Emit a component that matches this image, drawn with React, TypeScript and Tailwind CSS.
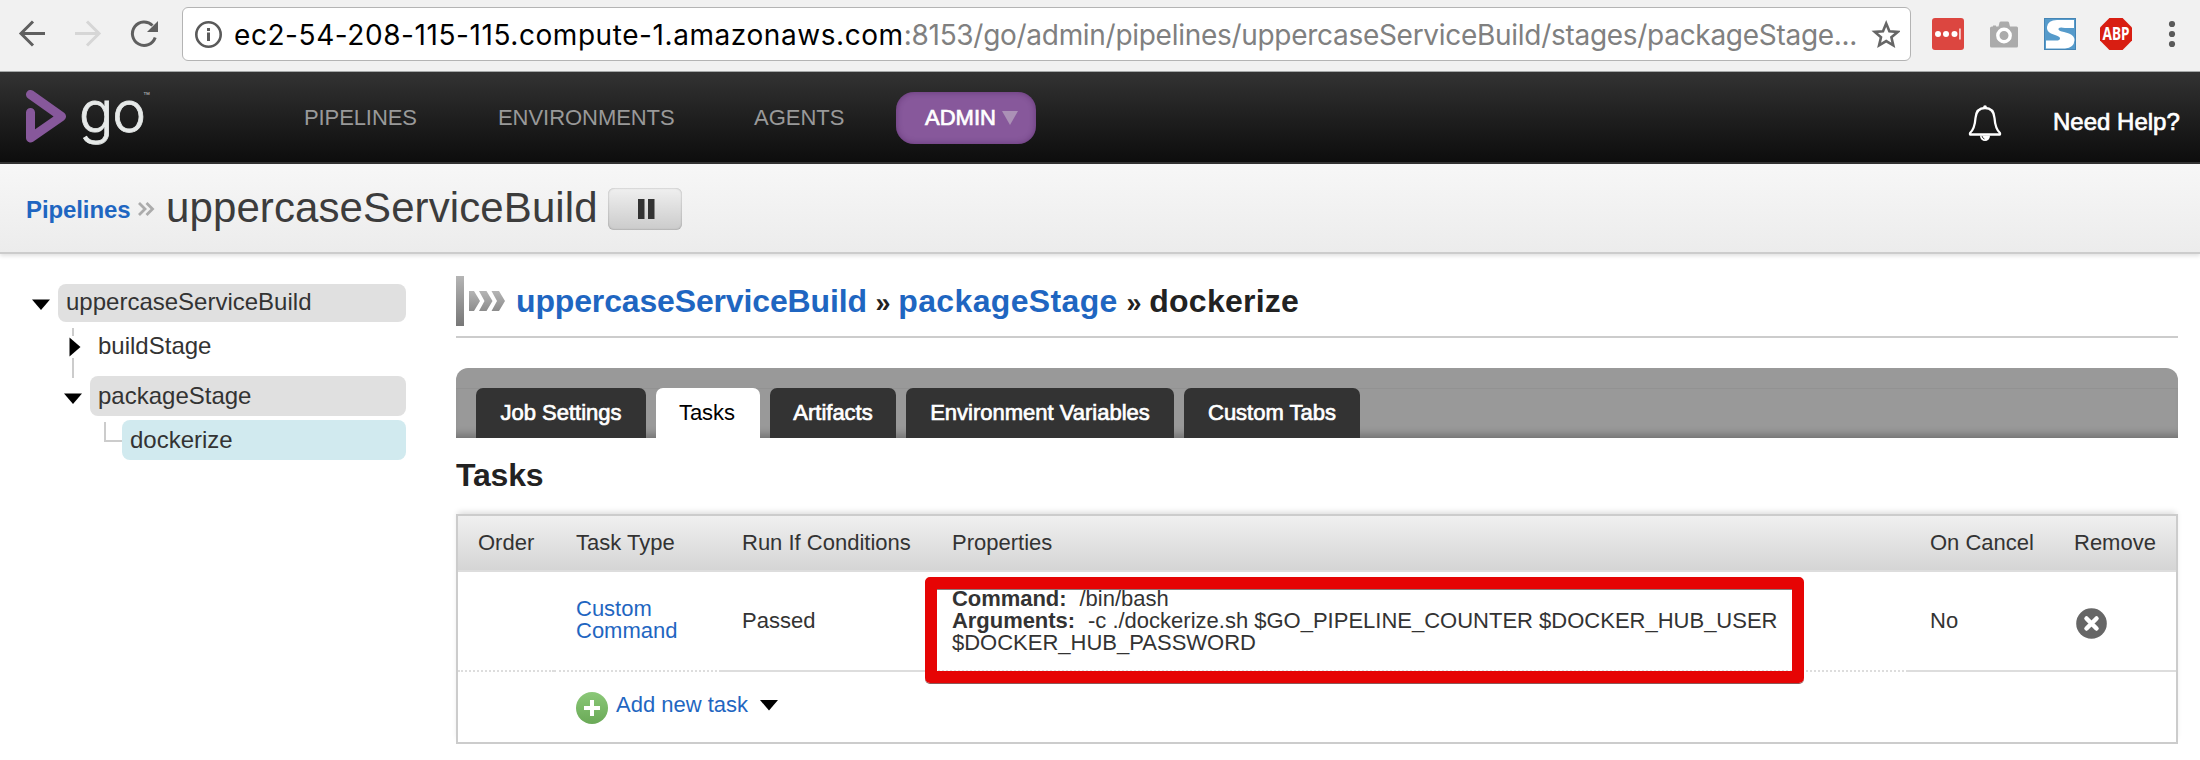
import type { ReactNode } from 'react';

function BrowserBar() {
  return (
    <div className="flex h-[72px] items-start border-b border-[#a5a8a8] bg-[#f1f1f1]">
      <svg width="182" height="71" viewBox="0 0 182 71" fill="none" className="shrink-0">
        <g stroke="#5f5f5f" strokeWidth="3">
          <path d="M45 33.5H21M33 21.5L21 33.5L33 45.5" />
          <path d="M75 33.5H99M87 21.5L99 33.5L87 45.5" stroke="#d6d6d6" />
          <path d="M155.2 37.5A11.7 11.7 0 1 1 152.5 25.5" />
        </g>
        <path d="M158 21V32H147Z" fill="#5f5f5f" />
      </svg>
      <div className="mt-[7px] flex h-[54px] w-[1729px] shrink-0 items-center rounded-[6px] border border-[#b4b4b4] bg-white">
        <svg width="28" height="28" viewBox="0 0 28 28" fill="none" className="ml-3 shrink-0">
          <circle cx="13.5" cy="14.5" r="12.2" stroke="#5a5a5a" strokeWidth="2.6" />
          <path d="M12 12.5H15V21H12ZM12 8H15V11H12Z" fill="#5a5a5a" />
        </svg>
        <div className="ml-[11px] w-[1634px] pt-0.5 whitespace-nowrap font-['Inter',sans-serif] text-[28px] leading-[52px]">
          <span className="tracking-[0.57px] text-black">ec2-54-208-115-115.compute-1.amazonaws.com</span>
          <span className="tracking-[-0.29px] text-[#808080]">
            :8153/go/admin/pipelines/uppercaseServiceBuild/stages/packageStage...
          </span>
        </div>
        <svg width="32" height="32" viewBox="0 0 32 32" fill="none" className="shrink-0">
          <path
            d="M18.2 5.5L21.4 13.2L29.7 13.9L23.4 19.3L25.3 27.4L18.2 23.1L11.1 27.4L13 19.3L6.7 13.9L15 13.2Z"
            stroke="#666"
            strokeWidth="2.6"
          />
        </svg>
      </div>
      <div className="mt-[18px] ml-[21px] flex h-8 items-center">
        <svg width="32" height="32" viewBox="0 0 32 32">
          <rect width="32" height="32" rx="3" fill="#dc4640" />
          <g fill="#fff">
            <circle cx="6" cy="16" r="3" />
            <circle cx="14" cy="16" r="3" />
            <circle cx="22.5" cy="16" r="3" />
            <rect x="27.3" y="10.5" width="1.3" height="11" />
          </g>
        </svg>
        <svg width="30" height="32" viewBox="0 0 30 32" className="ml-[25px]">
          <path
            d="M3 8.5H4V7.5H7V8.5H9.5L10.5 4.5Q10.8 3.5 12 3.5H18.5Q19.7 3.5 20 4.5L21 8.5H27.5Q29 8.5 29 10V28Q29 29.5 27.5 29.5H2.5Q1 29.5 1 28V10Q1 8.5 3 8.5Z"
            fill="#ababab"
          />
          <circle cx="15" cy="17.5" r="6.2" fill="#ababab" stroke="#fff" strokeWidth="3.4" />
        </svg>
        <svg width="32" height="32" viewBox="0 0 32 32" className="ml-[25px]">
          <rect width="32" height="32" fill="#4585b5" />
          <rect x="1" y="1" width="30" height="30" fill="#569bcb" />
          <path
            d="M30 2V10H21Q14 8.5 14.5 11.5Q15 13 20 14L25 15.5Q30.5 17.5 30.5 22Q30 30 21 30.5H2V22.5H10Q16.5 23 16 20Q15.5 18.5 11 17L7 15.5Q2.5 13 3 9Q4 2 13 2Z"
            fill="#fff"
          />
        </svg>
        <svg width="32" height="32" viewBox="0 0 32 32" className="ml-6 overflow-visible">
          <path d="M9.4 0H22.6L32 9.4V22.6L22.6 32H9.4L0 22.6V9.4Z" fill="#d81e12" />
          <text
            x="16"
            y="22"
            textAnchor="middle"
            textLength="27"
            lengthAdjust="spacingAndGlyphs"
            className="fill-white font-['Noto_Sans',sans-serif] text-[17px] font-bold"
          >
            ABP
          </text>
        </svg>
        <svg width="8" height="32" viewBox="0 0 8 32" className="ml-9" fill="#5a5a5a">
          <circle cx="4" cy="6" r="3.1" />
          <circle cx="4" cy="16" r="3.1" />
          <circle cx="4" cy="26" r="3.1" />
        </svg>
      </div>
    </div>
  );
}

function SiteHeader() {
  return (
    <div className="flex h-[92px] items-start border-b-2 border-[#333] bg-linear-to-b from-[#333] to-[#0d0d0d] text-[22px] leading-[28px] text-[#999]">
      <svg width="42" height="56" viewBox="0 0 42 56" fill="none" className="mt-[17px] ml-[26px] shrink-0">
        <path
          d="M4.5 5.5L35.5 27.5L4.5 49V23.5"
          stroke="#87589b"
          strokeWidth="9"
          strokeLinecap="round"
          strokeLinejoin="round"
        />
      </svg>
      <div className="mt-[14px] ml-[11px] flex w-[225px] items-start font-['Inter',sans-serif] text-[#e6e9e8]">
        <span className="text-[57px] leading-[52px] font-light tracking-[-1px] [-webkit-text-stroke:0.8px_#e6e9e8]">go</span>
        <span className="mt-[4px] -ml-0.5 text-[11px] leading-[12px] text-[#aaa]">™</span>
      </div>
      <div className="mt-8 w-[194px] tracking-[-0.1px]">PIPELINES</div>
      <div className="mt-8 w-[256px] tracking-[-0.05px]">ENVIRONMENTS</div>
      <div className="mt-8 w-[142px]">AGENTS</div>
      <div className="mt-5 flex h-[52px] w-[140px] items-center rounded-[18px] bg-[#87589b] pl-[29px] text-white shadow-[inset_0_0_6px_rgba(50,10,70,0.4)]">
        <span className="[-webkit-text-stroke:0.7px_#fff]">ADMIN</span>
        <svg width="16" height="14" viewBox="0 0 16 14" className="ml-[6px]">
          <path d="M0 0H16L8 14Z" fill="#ab91b6" />
        </svg>
      </div>
      <svg width="34" height="38" viewBox="0 0 34 38" fill="none" className="mt-8 ml-[932px] shrink-0">
        <path
          d="M17 4C11 4 8 8 7.5 14C7 21 6 25.5 2 29V30.5H32V29C28 25.5 27 21 26.5 14C26 8 23 4 17 4Z"
          stroke="#fff"
          strokeWidth="2.3"
          strokeLinejoin="round"
        />
        <circle cx="17" cy="3.2" r="1.9" fill="#fff" />
        <path d="M12 31.5A5 5.5 0 0 0 22 31.5Z" fill="#fff" />
        <path d="M14 32Q14.5 34.5 16.5 35" stroke="#444" />
      </svg>
      <div className="mt-9 ml-[51px] whitespace-nowrap text-[24px] text-white [-webkit-text-stroke:0.7px_#fff]">
        Need Help?
      </div>
    </div>
  );
}

function TitleBar() {
  return (
    <div className="flex h-[90px] items-start border-b-2 border-[#ccc] bg-linear-to-b from-[#f7f7f7] to-[#ececec] shadow-[0_2px_4px_rgba(0,0,0,0.12)]">
      <span className="mt-[31px] ml-[26px] w-[111px] text-[24px] leading-[30px] font-bold tracking-[-0.1px] text-[#1f66c1]">
        Pipelines
      </span>
      <svg width="18" height="14" viewBox="0 0 18 14" fill="none" className="mt-[38px]" stroke="#ababab" strokeWidth="2.8">
        <path d="M2 1L8 7L2 13M9.5 1L15.5 7L9.5 13" />
      </svg>
      <h1 className="mt-[19px] ml-[11px] w-[442px] text-[42px] leading-[50px] tracking-[0.1px] text-[#3c3c3c]">
        uppercaseServiceBuild
      </h1>
      <div className="mt-6 flex h-[42px] w-[74px] items-center justify-center rounded-[6px] bg-linear-to-b from-[#f0f0f0] to-[#cbcbcb] shadow-[inset_0_0_2px_rgba(0,0,0,0.35)]">
        <svg width="18" height="20" viewBox="0 0 18 20" fill="#333" className="mb-px ml-px">
          <rect x="1" width="6.5" height="20" />
          <rect x="11" width="6.5" height="20" />
        </svg>
      </div>
    </div>
  );
}

function Sidebar() {
  return (
    <div className="flex w-[406px] shrink-0 flex-col pt-[30px] text-[24px] text-[#333]">
      <div className="flex h-[38px] pl-8">
        <svg width="26" height="38" viewBox="0 0 26 38">
          <path d="M0 15.5H18L9 26Z" />
        </svg>
        <div className="flex-1 rounded-[8px] bg-[#e0e0e0] pl-2 leading-[36px]">uppercaseServiceBuild</div>
      </div>
      <div className="flex h-[54px] pl-16">
        <svg width="26" height="54" viewBox="0 0 26 54">
          <path d="M8 6H10V14H8ZM8 36H10V54H8Z" fill="#ccc" />
          <path d="M5.5 15.5V34.5L16.5 25Z" />
        </svg>
        <div className="pl-2 leading-[48px]">buildStage</div>
      </div>
      <div className="flex h-10 pl-16">
        <svg width="26" height="40" viewBox="0 0 26 40">
          <path d="M8 0H10V2H8Z" fill="#ccc" />
          <path d="M0 17.5H18L9 28Z" />
        </svg>
        <div className="flex-1 rounded-[8px] bg-[#e0e0e0] pl-2 leading-[40px]">packageStage</div>
      </div>
      <div className="mt-1 flex h-10 pl-[98px]">
        <svg width="24" height="40" viewBox="0 0 24 40" fill="none" stroke="#ccc" strokeWidth="2">
          <path d="M7 2V21H24" />
        </svg>
        <div className="flex-1 rounded-[8px] bg-[#d1eaef] pl-2 leading-[40px]">dockerize</div>
      </div>
    </div>
  );
}

function Tab({ children, className }: { children: ReactNode; className: string }) {
  return (
    <div
      className={`-mt-px h-[50px] rounded-t-[7px] bg-[#333] text-center text-[22px] leading-[49px] text-white [-webkit-text-stroke:0.7px_#fff] ${className}`}
    >
      {children}
    </div>
  );
}

const columns = 'grid grid-cols-[96px_167px_208px_979px_143px_1fr]';

function TaskTable() {
  return (
    <div className="mt-0.5 border-2 border-[#ccc] text-[22px] leading-[22px] text-[#333] shadow-[0_-4px_6px_-2px_rgba(0,0,0,0.14)]">
      <div
        className={`${columns} h-14 items-center border-b-2 border-[#ddd] bg-linear-to-b from-[#f0f0f0] to-[#d5d5d5] pb-px`}
      >
        <div className="pl-5">Order</div>
        <div className="pl-[22px]">Task Type</div>
        <div className="pl-[21px]">Run If Conditions</div>
        <div className="pl-[23px]">Properties</div>
        <div className="pl-[22px]">On Cancel</div>
        <div className="pl-[23px]">Remove</div>
      </div>
      <div className={`${columns} h-[100px]`}>
        <div className="border-b-2 border-dotted border-[#ddd]" />
        <div className="flex items-center border-b-2 border-dotted border-[#ddd] pb-[3px] pl-[22px] text-[#1f66c1]">
          Custom
          <br />
          Command
        </div>
        <div className="flex items-center border-b-2 border-[#ddd] pb-px pl-[21px]">Passed</div>
        <div className="relative flex items-center border-b-2 border-dotted border-[#ddd] pb-px pl-[23px]">
          <div>
            <div>
              <b className="mr-[13px] tracking-[-0.05px]">Command:</b>/bin/bash
            </div>
            <div>
              <b className="mr-[13px] tracking-[-0.05px]">Arguments:</b>-c ./dockerize.sh $GO_PIPELINE_COUNTER
              $DOCKER_HUB_USER
            </div>
            <div>$DOCKER_HUB_PASSWORD</div>
          </div>
          <div className="absolute top-[5px] left-[-4px] z-10 h-[106px] w-[879px] rounded-[5px] border-12 border-[#e60404] shadow-[0_1px_0_#8a5a5a,inset_0_1px_0_#8a7a7a]" />
        </div>
        <div className="flex items-center border-b-2 border-[#ddd] pb-px pl-[22px]">No</div>
        <div className="flex items-center border-b-2 border-[#ddd] pt-1 pl-[25px]">
          <svg width="31" height="31" viewBox="0 0 31 31">
            <circle cx="15.5" cy="15.5" r="15.3" fill="#666" />
            <path d="M10.5 10.5L20.5 20.5M20.5 10.5L10.5 20.5" stroke="#fff" strokeWidth="4.5" strokeLinecap="round" />
          </svg>
        </div>
      </div>
      <div className="flex h-[70px] pl-[118px]">
        <svg width="32" height="32" viewBox="0 0 32 32" className="mt-5">
          <defs>
            <linearGradient id="add" x2="0" y2="1">
              <stop stopColor="#8bc878" />
              <stop offset="1" stopColor="#6aa957" />
            </linearGradient>
          </defs>
          <circle cx="16" cy="16" r="16" fill="url(#add)" />
          <path d="M16 8V24M8 16H24" stroke="#fff" strokeWidth="4" />
        </svg>
        <span className="ml-2 leading-[65px] text-[#1f66c1]">Add new task</span>
        <svg width="18" height="11" viewBox="0 0 18 11" className="mt-7 ml-3">
          <path d="M0 0H18L9 10.5Z" />
        </svg>
      </div>
    </div>
  );
}

export default function App() {
  return (
    <div className="h-[760px] w-[2200px] overflow-hidden bg-white font-['Liberation_Sans',Arial,sans-serif]">
      <BrowserBar />
      <SiteHeader />
      <TitleBar />
      <div className="flex">
        <Sidebar />
        <main className="ml-[50px] w-[1722px] pt-[22px]">
          <div className="flex h-[62px] items-start border-b-2 border-[#ccc]">
            <div className="h-[50px] w-2 bg-linear-to-b from-[#b5b5b5] to-[#777]" />
            <svg width="38" height="20" viewBox="0 0 38 20" className="mt-[15px] ml-[5px]">
              <defs>
                <linearGradient id="chevron" x2="0" y2="1">
                  <stop stopColor="#b5b5b5" />
                  <stop offset="1" stopColor="#8c8c8c" />
                </linearGradient>
              </defs>
              <path
                d="M0 0H5L11 10L5 20H0ZM10 0H17.5L23.5 10L17.5 20H10L15.5 10ZM22.5 0H30L36 10L30 20H22.5L28 10Z"
                fill="url(#chevron)"
              />
            </svg>
            <h2 className="ml-[9px] text-[32px] leading-[50px] font-bold tracking-[-0.1px] whitespace-nowrap text-[#222]">
              <span className="tracking-[-0.15px] text-[#1f66c1]">uppercaseServiceBuild</span>{' '}
              <span className="-mr-px text-[27px]">»</span>{' '}
              <span className="tracking-[0.35px] text-[#1f66c1]">packageStage</span>{' '}
              <span className="-mr-px text-[27px]">»</span> <span className="tracking-[0.25px]">dockerize</span>
            </h2>
          </div>
          <div className="mt-[30px] rounded-t-[12px] bg-[#999] pt-5">
            <div className="flex h-[50px] gap-[10px] border-t border-[#929292] pl-5 shadow-[inset_0_-9px_8px_-6px_rgba(0,0,0,0.28)]">
              <Tab className="w-[170px]">Job Settings</Tab>
              <div className="-mt-px h-[50px] w-[104px] rounded-t-[7px] bg-white pr-0.5 text-center text-[22px] leading-[49px] text-black">
                Tasks
              </div>
              <Tab className="w-[126px]">Artifacts</Tab>
              <Tab className="w-[268px]">Environment Variables</Tab>
              <Tab className="w-[176px]">Custom Tabs</Tab>
            </div>
          </div>
          <h3 className="h-[74px] text-[32px] leading-[74px] font-bold tracking-[-0.2px] text-[#222]">Tasks</h3>
          <TaskTable />
        </main>
      </div>
    </div>
  );
}
